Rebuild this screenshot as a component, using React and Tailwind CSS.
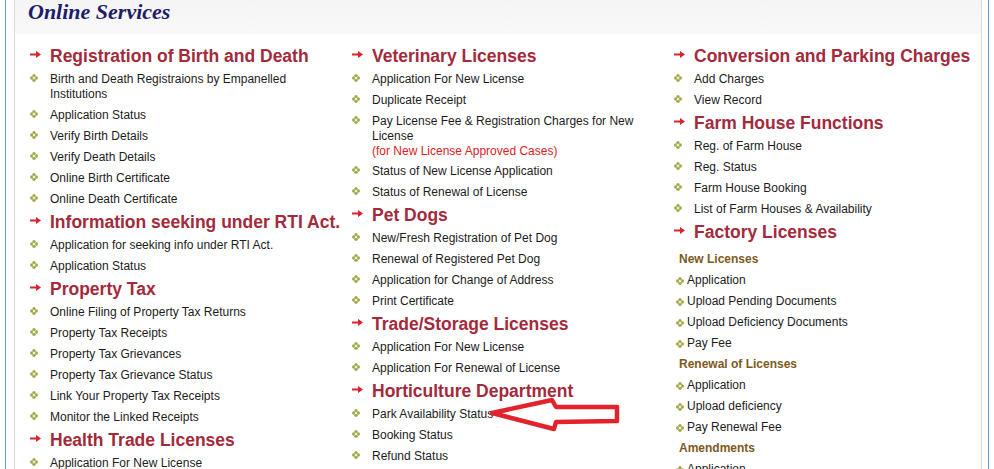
import React from "react";

const col1 = [
  {
    title: "Registration of Birth and Death",
    items: [
      "Birth and Death Registraions by Empanelled Institutions",
      "Application Status",
      "Verify Birth Details",
      "Verify Death Details",
      "Online Birth Certificate",
      "Online Death Certificate",
    ],
  },
  {
    title: "Information seeking under RTI Act.",
    items: ["Application for seeking info under RTI Act.", "Application Status"],
  },
  {
    title: "Property Tax",
    items: [
      "Online Filing of Property Tax Returns",
      "Property Tax Receipts",
      "Property Tax Grievances",
      "Property Tax Grievance Status",
      "Link Your Property Tax Receipts",
      "Monitor the Linked Receipts",
    ],
  },
  { title: "Health Trade Licenses", items: ["Application For New License"] },
];

const col2 = [
  {
    title: "Veterinary Licenses",
    items: [
      "Application For New License",
      "Duplicate Receipt",
      {
        text: "Pay License Fee & Registration Charges for New License",
        note: "(for New License Approved Cases)",
      },
      "Status of New License Application",
      "Status of Renewal of License",
    ],
  },
  {
    title: "Pet Dogs",
    items: [
      "New/Fresh Registration of Pet Dog",
      "Renewal of Registered Pet Dog",
      "Application for Change of Address",
      "Print Certificate",
    ],
  },
  {
    title: "Trade/Storage Licenses",
    items: ["Application For New License", "Application For Renewal of License"],
  },
  {
    title: "Horticulture Department",
    items: ["Park Availability Status", "Booking Status", "Refund Status"],
  },
];

const col3 = [
  { title: "Conversion and Parking Charges", items: ["Add Charges", "View Record"] },
  {
    title: "Farm House Functions",
    items: [
      "Reg. of Farm House",
      "Reg. Status",
      "Farm House Booking",
      "List of Farm Houses & Availability",
    ],
  },
];

const factory = [
  {
    sub: "New Licenses",
    items: ["Application", "Upload Pending Documents", "Upload Deficiency Documents", "Pay Fee"],
  },
  { sub: "Renewal of Licenses", items: ["Application", "Upload deficiency", "Pay Renewal Fee"] },
  { sub: "Amendments", items: ["Application"] },
];

function RedArrow() {
  return (
    <svg width="11" height="7" viewBox="0 0 11 7" className="mt-[4px]">
      <rect x="0" y="2.5" width="8" height="2" fill="#d8232a" />
      <polygon points="6,0 11,3.5 6,7" fill="#d8232a" />
    </svg>
  );
}

function Bullet({ className = "" }) {
  return (
    <svg width="8" height="8" viewBox="0 0 8 8" className={className}>
      <circle cx="4" cy="1.7" r="1.7" fill="#a3a84a" />
      <circle cx="4" cy="6.3" r="1.7" fill="#a3a84a" />
      <circle cx="1.7" cy="4" r="1.7" fill="#a3a84a" />
      <circle cx="6.3" cy="4" r="1.7" fill="#a3a84a" />
      <circle cx="4" cy="4" r="1.3" fill="#eef0d8" />
    </svg>
  );
}

function Heading({ children }) {
  return (
    <div className="flex h-[25px]">
      <div className="w-[20px] shrink-0">
        <RedArrow />
      </div>
      <div className="text-[17.5px] leading-[19px] font-bold text-[#a42a3b]">{children}</div>
    </div>
  );
}

function Item({ item }) {
  const text = typeof item === "string" ? item : item.text;
  return (
    <li className="flex pb-[6px]">
      <div className="w-[20px] shrink-0 pt-[2px]">
        <Bullet />
      </div>
      <div className="pr-[20px] text-[12px] leading-[15px] text-[#1c1c1c]">
        {text}
        {item.note && (
          <div className="leading-[14px] text-[#e0201f]">{item.note}</div>
        )}
      </div>
    </li>
  );
}

function Column({ sections, children }) {
  return (
    <div>
      {sections.map((s) => (
        <div key={s.title}>
          <Heading>{s.title}</Heading>
          <ul>
            {s.items.map((it, i) => (
              <Item key={i} item={it} />
            ))}
          </ul>
        </div>
      ))}
      {children}
    </div>
  );
}

export default function App() {
  return (
    <div
      className="relative h-[469px] overflow-hidden bg-white px-[5px]"
      style={{ fontFamily: '"Liberation Sans", Arial, sans-serif' }}
    >
      <div className="h-full border-x border-[#5f9ccc] pl-[8px] pr-[6px]">
        <div className="h-full border-x border-[#dcdcdc]">
          <div className="h-[34px] bg-gradient-to-b from-[#f4f4f4] to-[#f9f9f9] pl-[13px]">
            <h2
              className="text-[22px] leading-[24px] font-bold italic text-[#1d1d6b]"
              style={{ fontFamily: '"Liberation Serif", "Times New Roman", serif' }}
            >
              Online Services
            </h2>
          </div>
          <div className="grid grid-cols-[322px_322px_1fr] pl-[15px] pt-[13px]">
            <Column sections={col1} />
            <Column sections={col2} />
            <Column sections={col3}>
              <Heading>Factory Licenses</Heading>
              <div className="pt-[4px]">
                {factory.map((g) => (
                  <div key={g.sub}>
                    <div className="pb-[6px] pl-[5px] text-[12px] leading-[15px] font-bold text-[#7d5a22]">
                      {g.sub}
                    </div>
                    <ul>
                      {g.items.map((t, i) => (
                        <li key={i} className="flex items-center pb-[6px] text-[12px] leading-[15px] text-[#1c1c1c]">
                          <Bullet className="ml-[2px] mr-[3px] shrink-0" />
                          {t}
                        </li>
                      ))}
                    </ul>
                  </div>
                ))}
              </div>
            </Column>
          </div>
        </div>
      </div>
      <svg
        className="pointer-events-none absolute left-[488px] top-[396px]"
        width="134"
        height="38"
        viewBox="0 0 134 38"
      >
        <polygon
          points="4,17 64,4 68,11 129,11 129,25 68,26 66,33"
          fill="none"
          stroke="#e3232b"
          strokeWidth="4.5"
          strokeLinejoin="round"
        />
      </svg>
    </div>
  );
}
